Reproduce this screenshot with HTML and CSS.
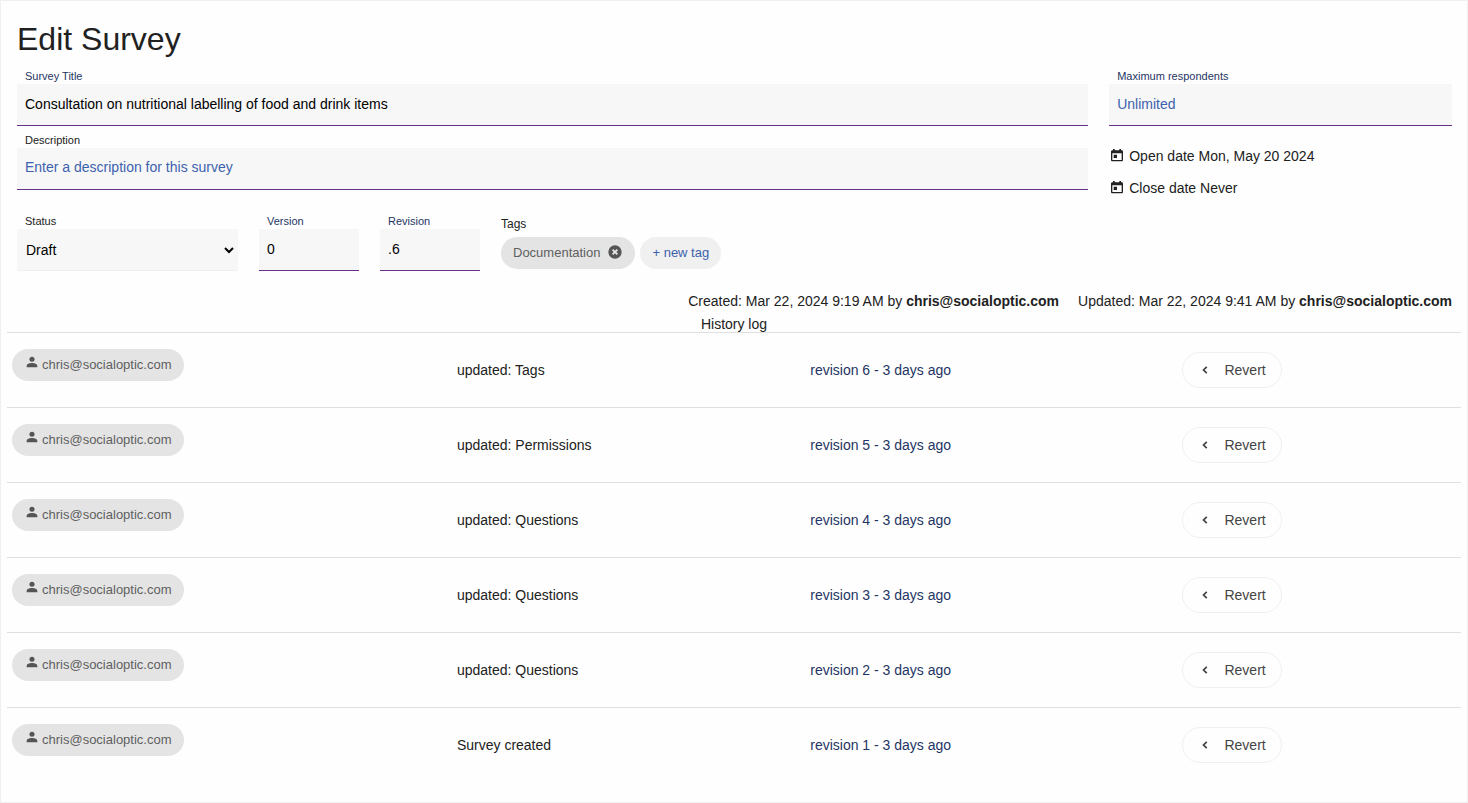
FILE: index.html
```html
<!doctype html>
<html lang="en">
<head>
<meta charset="utf-8">
<title>Edit Survey</title>
<link rel="stylesheet" href="styles.css">
</head>

<body>
<svg class="sprite" aria-hidden="true">
	<symbol id="icon-today" viewBox="0 0 24 24"><path d="M19 3.500h-1V1.500h-2.500v2h-7v-2H6v2H5c-1.100 0-2 .9-2 2V18c0 1.100.9 2 2 2h14c1.100 0 2-.9 2-2V5.500c0-1.100-.9-2-2-2zM19 18H5V8h14zM7 10h5v5H7z"/></symbol>
	<symbol id="icon-person" viewBox="0 0 24 24"><circle cx="12" cy="8" r="3.800"/><path d="M12 13.500c-3 0-8 1.200-8 4.500v2h16v-2c0-3.300-5-4.500-8-4.500z"/></symbol>
	<symbol id="icon-cancel" viewBox="0 0 24 24"><path fill-rule="evenodd" d="M12 2a10 10 0 1 0 0 20 10 10 0 0 0 0-20zm4.500 12.500l-2 2L12 14l-2.500 2.500-2-2L10 12 7.500 9.500l2-2L12 10l2.500-2.500 2 2L14 12z"/></symbol>
	<symbol id="icon-left" viewBox="0 0 24 24"><path class="line" d="M15 6.500L9.500 12l5.500 5.500"/></symbol>
</svg>
<main class="page">
	<form class="survey">
		<h1>Edit Survey</h1>
		<div class="columns">
			<div class="col">
				<div class="field">
					<label for="title" class="required">Survey Title</label>
					<input type="text" id="title" value="Consultation on nutritional labelling of food and drink items">
				</div>
				<div class="field">
					<label for="description">Description</label>
					<textarea id="description" rows="1" placeholder="Enter a description for this survey"></textarea>
				</div>
			</div>
			<div class="col">
				<div class="field">
					<label for="max" class="required">Maximum respondents</label>
					<input type="text" id="max" placeholder="Unlimited">
				</div>
				<div class="dates">
					<p><svg class="icon"><use href="#icon-today"/></svg>Open date Mon, May 20 2024</p>
					<p><svg class="icon"><use href="#icon-today"/></svg>Close date Never</p>
				</div>
			</div>
		</div>
		<div class="details">
			<div class="field status">
				<label for="status">Status</label>
				<select id="status">
					<option>Draft</option>
				</select>
			</div>
			<div class="field number">
				<label for="version" class="required">Version</label>
				<input type="text" id="version" value="0">
			</div>
			<div class="field number">
				<label for="revision" class="required">Revision</label>
				<input type="text" id="revision" value=".6">
			</div>
			<div class="tags">
				<h2>Tags</h2>
				<div class="tag-list">
					<span class="chip">Documentation<button type="button" class="remove" aria-label="Remove Documentation"><svg class="icon"><use href="#icon-cancel"/></svg></button></span>
					<button type="button" class="chip new-tag">+ new tag</button>
				</div>
			</div>
		</div>
		<div class="meta">
			<p>Created: Mar 22, 2024 9:19 AM by <b>chris@socialoptic.com</b></p>
			<p>Updated: Mar 22, 2024 9:41 AM by <b>chris@socialoptic.com</b></p>
		</div>
	</form>
	<table class="history">
		<caption>History log</caption>
		<colgroup>
			<col class="col-user">
			<col class="col-action">
			<col class="col-revision">
			<col>
		</colgroup>
		<tbody>
			<tr>
				<td class="user"><span class="chip"><svg class="icon"><use href="#icon-person"/></svg>chris@socialoptic.com</span></td>
				<td>updated: Tags</td>
				<td><a href="#">revision 6 - 3 days ago</a></td>
				<td><button type="button" class="revert"><svg class="icon"><use href="#icon-left"/></svg>Revert</button></td>
			</tr>
			<tr>
				<td class="user"><span class="chip"><svg class="icon"><use href="#icon-person"/></svg>chris@socialoptic.com</span></td>
				<td>updated: Permissions</td>
				<td><a href="#">revision 5 - 3 days ago</a></td>
				<td><button type="button" class="revert"><svg class="icon"><use href="#icon-left"/></svg>Revert</button></td>
			</tr>
			<tr>
				<td class="user"><span class="chip"><svg class="icon"><use href="#icon-person"/></svg>chris@socialoptic.com</span></td>
				<td>updated: Questions</td>
				<td><a href="#">revision 4 - 3 days ago</a></td>
				<td><button type="button" class="revert"><svg class="icon"><use href="#icon-left"/></svg>Revert</button></td>
			</tr>
			<tr>
				<td class="user"><span class="chip"><svg class="icon"><use href="#icon-person"/></svg>chris@socialoptic.com</span></td>
				<td>updated: Questions</td>
				<td><a href="#">revision 3 - 3 days ago</a></td>
				<td><button type="button" class="revert"><svg class="icon"><use href="#icon-left"/></svg>Revert</button></td>
			</tr>
			<tr>
				<td class="user"><span class="chip"><svg class="icon"><use href="#icon-person"/></svg>chris@socialoptic.com</span></td>
				<td>updated: Questions</td>
				<td><a href="#">revision 2 - 3 days ago</a></td>
				<td><button type="button" class="revert"><svg class="icon"><use href="#icon-left"/></svg>Revert</button></td>
			</tr>
			<tr>
				<td class="user"><span class="chip"><svg class="icon"><use href="#icon-person"/></svg>chris@socialoptic.com</span></td>
				<td>Survey created</td>
				<td><a href="#">revision 1 - 3 days ago</a></td>
				<td><button type="button" class="revert"><svg class="icon"><use href="#icon-left"/></svg>Revert</button></td>
			</tr>
		</tbody>
	</table>
</main>
</body>
</html>
```

FILE: styles.css
```css
*{ box-sizing:border-box;}
body,h1,h2,p{ margin:0; padding:0;}
body{ font:14px/16px "Liberation Sans", Arial, sans-serif; color:#212121; background:#fefefe;}
input,select,textarea,button{ font:inherit; margin:0;}
button{ cursor:pointer; border:none; background:none; padding:0;}
a{ color:#1f3564; text-decoration:none;}
.sprite{ display:none;}
.icon{ width:16px; height:16px; fill:currentColor; flex:none;}
.line{ fill:none; stroke:currentColor; stroke-width:3;}

.page{ min-height:100vh; border:1px solid #f0f0f0; padding:20px 6px 16px;}
.survey{ padding:0 9px 0 10px;}
h1{ font-size:32px; line-height:36px; font-weight:400; margin-bottom:12px;}

.columns{ display:grid; grid-template-columns:25fr 8fr; gap:21px;}
.col{ display:flex; flex-direction:column; gap:7px;}
.field{ display:flex; flex-direction:column;}
.field label{ font-size:11px; line-height:15px; padding-left:8px;}
.field .required{ color:#1f3564;}
.field input,.field textarea{ width:100%; height:42px; padding:0 8px 2px; border:none; border-bottom:1px solid #6a2f86; border-radius:0; background:#f7f7f7; color:#000;}
.field textarea{ display:block; padding-top:11px; resize:none; overflow:hidden;}
.field input::placeholder,.field textarea::placeholder{ color:#3d62ad; opacity:1;}
.field select{ width:100%; height:42px; padding:0 1px 0 4px; border:1px solid #f7f7f7; border-bottom-color:#efefef; border-radius:2px; background:#f7f7f7; color:#000;}
.dates{ display:flex; flex-direction:column; gap:16px; padding-top:15px;}
.dates p{ display:flex; gap:4px;}

.details{ display:flex; gap:21px; margin-top:18px;}
.status{ width:221px;}
.number{ width:100px;}
.tags{ padding-top:2px;}
.tags h2{ font-size:12px; line-height:16px; font-weight:400; margin-bottom:5px;}
.tag-list{ display:flex; gap:5px;}
.chip{ display:inline-flex; align-items:center; height:32px; padding:0 12px; border-radius:16px; background:#e4e4e4; color:#5f5f5f; font-size:13px;}
.remove{ display:flex; margin-left:7px; padding-bottom:2px; color:#555;}
.new-tag{ background:#f0f0f0; color:#3d62ad;}

.meta{ display:flex; justify-content:flex-end; gap:19px; margin-top:22px;}

.history{ width:100%; table-layout:fixed; border-collapse:collapse; margin-top:7px;}
.history caption{ line-height:16px;}
.history td{ height:75px; padding:0 5px; border-top:1px solid #e0e0e0;}
.history .user{ vertical-align:top; padding-top:16px;}
.user .icon{ margin-right:2px; margin-bottom:7px; color:#555;}
.col-user{ width:30.6%;}
.col-action{ width:24.3%;}
.col-revision{ width:25.6%;}
.revert{ display:inline-flex; align-items:center; gap:12px; height:36px; padding:0 15px; border:1px solid #f0f0f0; border-radius:18px; color:#444; vertical-align:middle;}
.revert .icon{ width:14px; height:14px;}
```
